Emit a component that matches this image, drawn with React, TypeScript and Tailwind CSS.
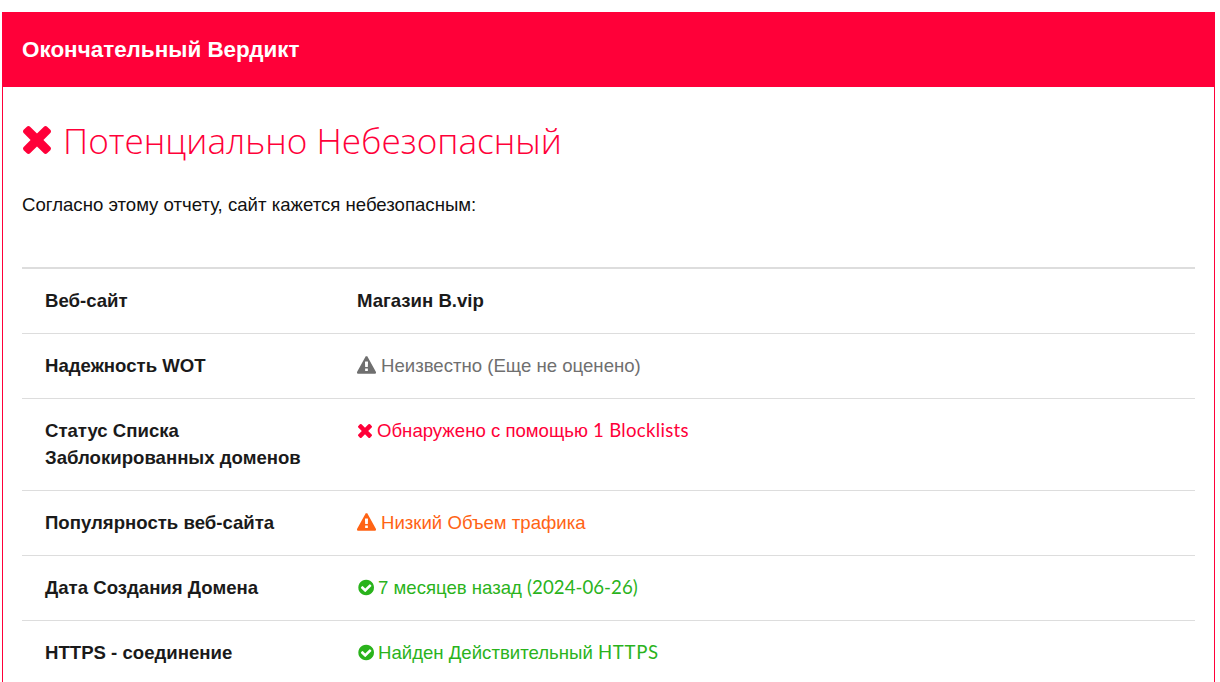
const sans = "font-['Liberation_Sans',Arial,sans-serif]";
const latin = "font-['Lato','Liberation_Sans',sans-serif] tracking-[0.3px]";
const latinTight = "font-['Lato','Liberation_Sans',sans-serif] tracking-[0.05px]";
const latinWide = "font-['Lato','Liberation_Sans',sans-serif] tracking-[0.7px]";

function TimesIcon({ className }: { className: string }) {
  return (
    <svg viewBox="110 366 1188 1188" fill="currentColor" className={className}>
      <path d="M1298 1322q0 40-28 68l-136 136q-28 28-68 28t-68-28l-294-294-294 294q-28 28-68 28t-68-28l-136-136q-28-28-28-68t28-68l294-294-294-294q-28-28-28-68t28-68l136-136q28-28 68-28t68 28l294 294 294-294q28-28 68-28t68 28l136 136q28 28 28 68t-28 68l-294 294 294 294q28 28 28 68z" />
    </svg>
  );
}

function WarnIcon({ className }: { className: string }) {
  return (
    <svg viewBox="0 0 1792 1664" fill="currentColor" className={className}>
      <path d="M1024 1375v-190q0-14-9.500-23.500t-22.500-9.500h-192q-13 0-22.500 9.500t-9.500 23.500v190q0 14 9.500 23.500t22.500 9.500h192q13 0 22.500-9.500t9.500-23.500zm-2-374l18-459q0-12-10-19-13-11-24-11h-220q-11 0-24 11-10 7-10 21l17 457q0 10 10 16.500t24 6.500h185q14 0 23.500-6.500t10.500-16.500zm-14-934l768 1408q35 63-2 126-17 29-46.500 46t-63.500 17h-1536q-34 0-63.500-17t-46.500-46q-37-63-2-126l768-1408q17-31 47-49t65-18 65 18 47 49z" />
    </svg>
  );
}

function CheckIcon({ className }: { className: string }) {
  return (
    <svg viewBox="0 64 1664 1664" fill="currentColor" className={className}>
      <path d="M1412 734q0-28-18-46l-91-90q-19-19-45-19t-45 19l-408 407-226-226q-19-19-45-19t-45 19l-91 90q-18 18-18 46 0 27 18 45l362 362q19 19 45 19 27 0 46-19l543-543q18-18 18-45zm252 162q0 209-103 385.500t-279.500 279.500-385.500 103-385.500-103-279.500-279.500-103-385.500 103-385.500 279.500-279.500 385.500-103 385.500 103 279.500 279.500 103 385.500z" />
    </svg>
  );
}

function Row({ label, children }: { label: React.ReactNode; children: React.ReactNode }) {
  return (
    <div className="flex border-b border-[#dddddd] py-[18.5px] text-[18.6px] leading-[27px]">
      <div className="w-[312px] shrink-0 pl-[23px] font-bold text-[#1a1a1a]">{label}</div>
      <div className="flex-1 pl-[23px]">{children}</div>
    </div>
  );
}

export default function App() {
  return (
    <div className={`min-h-[682px] overflow-hidden bg-white pt-3 pl-[2px] pr-[5px] ${sans}`}>
      <div className="border-x border-[#ff0039]">
        <div className="-mx-px bg-[#ff0039] px-[20px] py-[23px] text-[22.45px] font-bold leading-[29px] text-white">
          Окончательный Вердикт
        </div>
        <div className="px-[19px]">
          <h1 className="mt-[31px] flex items-center font-['Open_Sans',sans-serif] text-[35.2px] font-light leading-[44px] text-[#ff0039]">
            <TimesIcon className="ml-px mr-[12px] h-[28px] w-[28px]" />
            Потенциально Небезопасный
          </h1>
          <p className="mt-[29px] h-[75.5px] text-[18.6px] leading-[27px] text-[#111111]">
            Согласно этому отчету, сайт кажется небезопасным:
          </p>
          <div className="border-t-2 border-[#dddddd]">
            <Row label="Веб-сайт">
              <span className="font-bold text-[#1a1a1a]">Магазин B.vip</span>
            </Row>
            <Row label="Надежность WOT">
              <span className="text-[#6f6f6f]">
                <WarnIcon className="mr-[5px] inline h-[18px] w-[19px] align-[-2px]" />
                Неизвестно (Еще не оценено)
              </span>
            </Row>
            <Row label={<>Статус Списка<br />Заблокированных доменов</>}>
              <span className="text-[#ff0039]">
                <TimesIcon className="ml-px mr-[5px] inline h-[14px] w-[14px] align-[-1px]" />
                Обнаружено с помощью <span className={latin}>1 Blocklists</span>
              </span>
            </Row>
            <Row label="Популярность веб-сайта">
              <span className="text-[#ff6314]">
                <WarnIcon className="mr-[5px] inline h-[18px] w-[19px] align-[-2px]" />
                Низкий Объем трафика
              </span>
            </Row>
            <Row label="Дата Создания Домена">
              <span className="text-[#2ab31c]">
                <CheckIcon className="mr-[4px] inline h-[17px] w-[17px] align-[-2px]" />
                7 месяцев назад <span className={latinTight}>(2024-06-26)</span>
              </span>
            </Row>
            <Row label="HTTPS - соединение">
              <span className="text-[#2ab31c]">
                <CheckIcon className="mr-[4px] inline h-[17px] w-[17px] align-[-2px]" />
                Найден Действительный <span className={latinWide}>HTTPS</span>
              </span>
            </Row>
          </div>
        </div>
      </div>
    </div>
  );
}
